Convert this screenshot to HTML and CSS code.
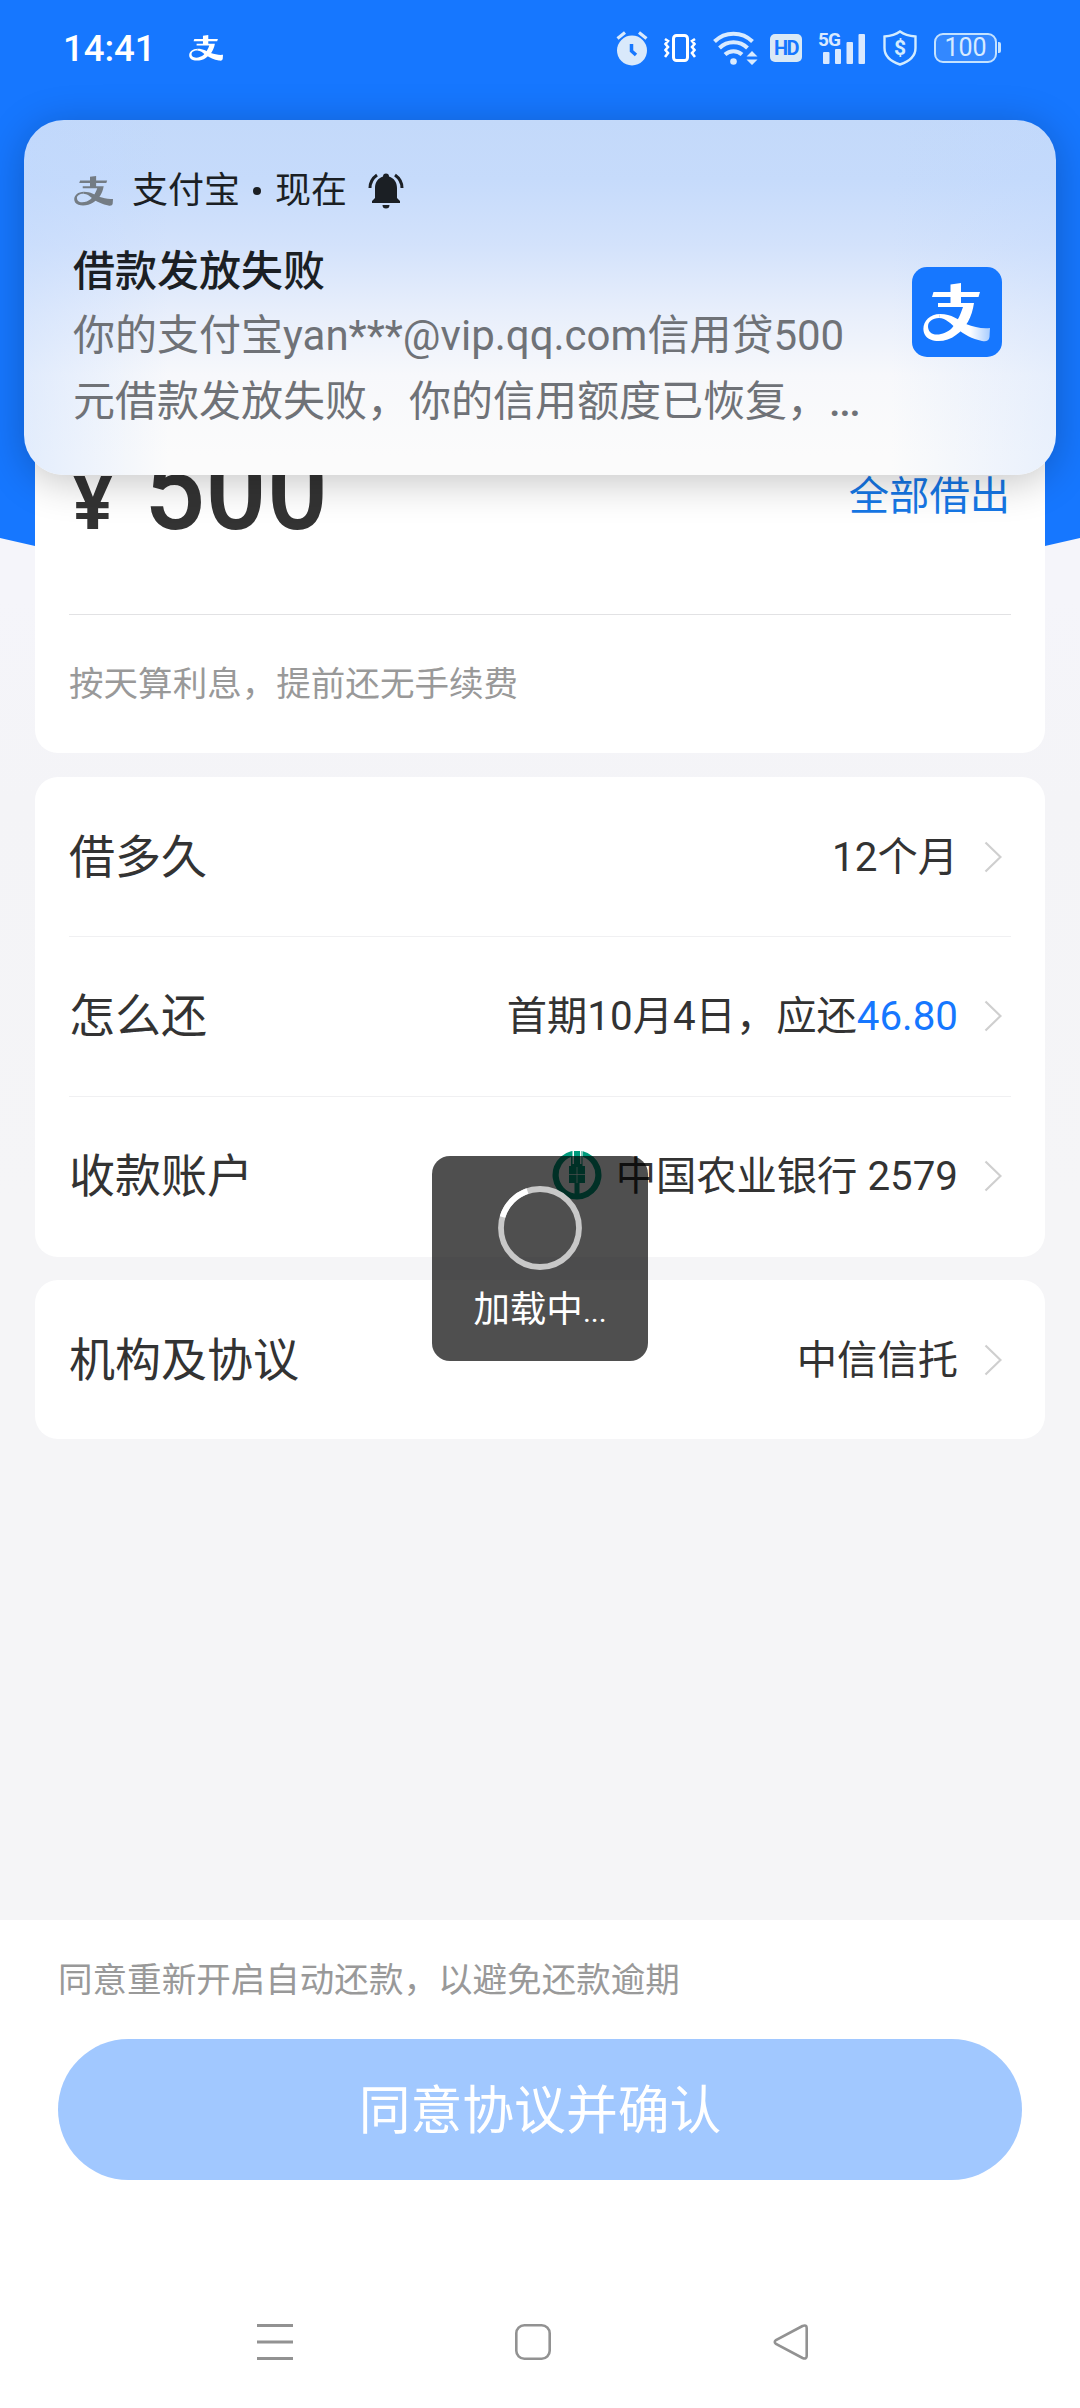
FILE: index.html
```html
<!DOCTYPE html>
<html lang="zh-CN">
<head>
<meta charset="utf-8">
<title>借款</title>
<link rel="stylesheet" href="styles.css">
</head>
<body>
<svg class="defs" width="0" height="0">
  <symbol id="alipay" viewBox="11 16 67 59" preserveAspectRatio="none">
    <path d="M38.5 17.5 49 16V25H68L66.500 30H49V36H62C60 50 54 61 44 68C34 76 18 76 13 68C8 59 15 47 28 47L27 51C18 51 13 58 18 65C23 70 34 67 40 61C46 54 49 46 51 40H26V36H38.500V30H20L21.500 25H38.500Z"/>
    <path d="M28 47C40 47 46 53 54 57C62 60 70 62 78 61L77.500 70C77 74 74 75 70 74C60 72 52 67 45 62C39 57 34 51 27 51Z"/>
  </symbol>
  <symbol id="chevron" viewBox="0 0 18 32"><path d="M1.500 1.500 16.500 16 1.500 30.500" fill="none" stroke="#cfcfcf" stroke-width="2.200"/></symbol>
</svg>
<div class="screen">
  <header class="status">
    <span class="clock">14:41</span>
    <svg class="status-app" width="34" height="26" fill="#fff"><use href="#alipay"/></svg>
    <div class="status-icons">
      <svg width="32" height="35" viewBox="0 0 32 35"><circle cx="16" cy="19.500" r="15" fill="#d9e9fb"/><path d="M1.500 7.500 9 1.500M30.500 7.500 23 1.500" stroke="#d9e9fb" stroke-width="3.200"/><path d="M15.500 13V20L20 24" fill="none" stroke="#1677ff" stroke-width="3.500"/></svg>
      <svg class="i-vibrate" width="32" height="28" viewBox="0 0 32 28" fill="none" stroke="#fff"><rect x="9.500" y="1.500" width="14" height="25" rx="3" stroke-width="3"/><path d="M1 5 4 7 1.500 10 4 13 1.500 16 4 19 1 23M31 5 28 7 30.500 10 28 13 30.500 16 28 19 31 23" stroke-width="2.600"/></svg>
      <svg class="i-wifi" width="44" height="34" viewBox="0 0 44 34"><g fill="none" stroke="#d9ebff" stroke-width="4"><path d="M1.500 10.500A27 27 0 0 1 39.500 10.500"/><path d="M6.500 17A20 20 0 0 1 34.500 17"/><path d="M12 23.500A12.500 12.500 0 0 1 29 23.500"/></g><circle cx="20.500" cy="30.500" r="3.300" fill="#d9ebff"/><path d="M33.500 25.500 39 20 44.500 25.500ZM33.500 28.500H44.500L39 34Z" fill="#d9ebff"/></svg>
      <span class="i-hd">HD</span>
      <div class="i-signal"><span>5G</span><svg width="46" height="32" viewBox="0 0 46 32" fill="#d9e9ff"><rect x="4" y="20" width="6.500" height="12" rx="1"/><rect x="16" y="17" width="6" height="15" rx="1"/><rect x="27.500" y="10" width="6.500" height="22" rx="1"/><rect x="39.500" y="2" width="6.500" height="30" rx="1"/></svg></div>
      <div class="i-shield"><svg width="34" height="36" viewBox="0 0 34 36"><path d="M17 1.500C21 4.500 26 6 32.500 6.500V18C32.500 26 26 31.500 17 34.500C8 31.500 1.500 26 1.500 18V6.500C8 6 13 4.500 17 1.500Z" fill="none" stroke="#d3ecff" stroke-width="2.400"/></svg><span>$</span></div>
      <div class="battery"><span>100</span></div>
    </div>
  </header>

  <main class="content">
    <section class="card amount-card">
      <div class="amount-row">
        <div class="amount"><span class="yen">¥</span><span class="num">500</span></div>
        <a class="all">全部借出</a>
      </div>
      <p class="note">按天算利息，提前还无手续费</p>
    </section>
    <section class="card terms">
      <div class="row"><span class="label">借多久</span><span class="value">12个月</span><svg class="chev" width="18" height="32"><use href="#chevron"/></svg></div>
      <div class="row"><span class="label">怎么还</span><span class="value">首期10月4日，应还<b>46.80</b></span><svg class="chev" width="18" height="32"><use href="#chevron"/></svg></div>
      <div class="row"><span class="label">收款账户</span>
        <svg class="bank" width="50" height="50" viewBox="0 0 50 50"><g fill="#009a7c"><path d="M19 1.200A24.500 24.500 0 1 0 31 1.200V7A19 19 0 0 1 27.500 43.500V33H33V16H30.500V1.200L29.500 1V14H28V1H22V14H20.500V1ZM22.500 33V43.500A19 19 0 0 1 19 7V16H17V33Z"/></g><path d="M25 17V33M17 24.500H33" stroke="#fff" stroke-width=".7"/></svg>
        <span class="value">中国农业银行 2579</span><svg class="chev" width="18" height="32"><use href="#chevron"/></svg></div>
    </section>
    <section class="card">
      <div class="row"><span class="label">机构及协议</span><span class="value">中信信托</span><svg class="chev" width="18" height="32"><use href="#chevron"/></svg></div>
    </section>
  </main>

  <footer class="footer">
    <p class="hint">同意重新开启自动还款，以避免还款逾期</p>
    <button class="confirm">同意协议并确认</button>
    <nav class="nav">
      <svg width="36" height="36" viewBox="0 0 36 36" fill="none" stroke="#929292" stroke-width="3"><path d="M0 1.500H36M0 18H36M0 34.500H36"/></svg>
      <svg width="36" height="36" viewBox="0 0 36 36" fill="none" stroke="#929292" stroke-width="2.600"><rect x="1.300" y="1.300" width="33.400" height="33.400" rx="8"/></svg>
      <svg width="36" height="36" viewBox="0 0 36 36" fill="none" stroke="#929292" stroke-width="2.600"><path d="M29.500 2 3 16Q.5 18 3 20L29.500 34Q33.700 35.500 33.700 32V4Q33.700.5 29.500 2Z"/></svg>
    </nav>
  </footer>

  <aside class="notification">
    <div class="n-head">
      <svg width="39" height="30" fill="#747c84"><use href="#alipay"/></svg>
      <span class="n-app">支付宝</span><i class="n-dot"></i><span>现在</span>
      <svg class="bell" width="36" height="36" viewBox="0 0 36 36" fill="#1b1f24"><path d="M18 .5A3 3 0 0 1 21 3.500C26 5 29 9.500 29 15V25L32 28V30H4V28L7 25V15C7 9.500 10 5 15 3.500A3 3 0 0 1 18 .5ZM14.500 32H21.500A3.500 3.500 0 0 1 14.500 32Z"/><path d="M2 15Q2 7 9 2M34 15Q34 7 27 2" fill="none" stroke="#1b1f24" stroke-width="3"/></svg>
    </div>
    <div class="n-main">
      <div class="n-text">
        <h1>借款发放失败</h1>
        <p>你的支付宝yan***@vip.qq.com信用贷500<br>元借款发放失败，你的信用额度已恢复，<span class="dots">...</span></p>
      </div>
      <div class="n-logo"><svg width="67" height="59"><defs><linearGradient id="tail" x1="0" x2="1"><stop offset=".6" stop-color="#fff"/><stop offset="1" stop-color="#a9cdff"/></linearGradient></defs><svg viewBox="11 16 67 59"><path fill="#fff" d="M38.500 17.500 49 16V25H68L66.500 30H49V36H62C60 50 54 61 44 68C34 76 18 76 13 68C8 59 15 47 28 47L27 51C18 51 13 58 18 65C23 70 34 67 40 61C46 54 49 46 51 40H26V36H38.500V30H20L21.500 25H38.500Z"/><path fill="url(#tail)" d="M28 47C40 47 46 53 54 57C62 60 70 62 78 61L77.500 70C77 74 74 75 70 74C60 72 52 67 45 62C39 57 34 51 27 51Z"/></svg></svg></div>
    </div>
  </aside>

  <div class="toast">
    <svg width="84" height="84" viewBox="0 0 84 84" fill="none" stroke-width="5.800"><circle cx="42" cy="42" r="39" stroke="#c8c8c8"/><path d="M4.500 31A39 39 0 0 1 29.500 5" stroke="#fff"/></svg>
    <span>加载中<small>...</small></span>
  </div>
</div>
</body>
</html>
```
FILE: styles.css
```css
* { box-sizing: border-box; margin: 0; padding: 0; }
body { margin: 0; font-family: Roboto, "Noto Sans CJK SC", sans-serif; font-weight: 400; color: #333; }
.defs { position: absolute; }
.screen {
  position: relative; isolation: isolate; width: 1080px; height: 2408px; overflow: hidden;
  display: flex; flex-direction: column;
  background: linear-gradient(#f5f5fa 600px, #f4f4f7 800px, #f5f5f7 1200px);
}
.screen::before {
  content: ""; position: absolute; z-index: -1; inset: 0 0 auto; height: 560px; background: #1677ff;
  clip-path: polygon(0 0, 100% 0, 100% 538px, 1045px 546px, 35px 546px, 0 538px);
}

/* Status bar */
.status { height: 96px; padding: 0 78px 0 63px; display: flex; align-items: center; color: #fff; }
.clock { width: 94px; font: 500 36.500px/1 Roboto, sans-serif; white-space: nowrap; padding-top: 2px; }
.status-app { margin-left: 32px; }
.status-icons { margin-left: auto; display: flex; align-items: center; }
.i-vibrate { margin-left: 16px; }
.i-wifi { margin-left: 17px; overflow: visible; }
.i-hd {
  margin-left: 13px; width: 32px; height: 28px; border-radius: 5px; background: #d9e9f6; color: #1677ff;
  font: 700 20px/29px "Roboto", sans-serif; letter-spacing: -1.5px; text-align: center;
}
.i-signal { margin-left: 17px; position: relative; display: flex; }
.i-signal span { position: absolute; left: -1px; top: -2px; font: 700 19px/19px Roboto, sans-serif; letter-spacing: -1px; color: #d9e9ff; }
.i-shield { margin-left: 18px; display: grid; place-items: center; color: #d3ecff; }
.i-shield > * { grid-area: 1 / 1; }
.i-shield span { font: 700 21px/36px Roboto, sans-serif; }
.battery {
  position: relative; margin: 0 5px 0 17px; width: 63px; height: 30px; border: 2.500px solid #c4e2ff; border-radius: 9px;
  background: #3388ff; text-align: center; font: 400 25px/26px Roboto, sans-serif; color: #d8ebff;
}
.battery::after { content: ""; position: absolute; right: -6px; top: 7px; width: 3px; height: 11px; border-radius: 0 2px 2px 0; background: #c4e2ff; }

/* Cards */
.content { flex: 1; padding: 0 35px; display: flex; flex-direction: column; }
.card { background: #fff; border-radius: 23px; padding: 0 34px; margin-bottom: 23px; }
.amount-card { height: 457px; margin: 200px 0 24px; display: flex; flex-direction: column; }
.amount-row { height: 319px; padding: 0 1px; display: flex; justify-content: space-between; border-bottom: 1.500px solid #e2e2e4; }
.amount { padding-top: 125px; display: flex; align-items: baseline; color: #333; }
.yen { width: 74px; padding-left: 3px; font: 700 74px/1 Roboto, sans-serif; }
.num { font: 500 116px/136px Roboto, sans-serif; transform: scaleX(.93); transform-origin: 0 50%; }
.all { margin-top: 171px; font-size: 40.300px; line-height: 60px; color: #1677e6; }
.note { padding-top: 43px; font-size: 34.560px; line-height: 52px; color: #999; }
.row { height: 159px; display: flex; align-items: center; }
.row + .row { height: 160px; border-top: 1.500px solid #f0f0f2; padding-bottom: 2px; }
.terms { padding-bottom: 1px; }
.label { margin-right: auto; padding-bottom: 7px; font-size: 46px; }
.value { padding-bottom: 7px; font-size: 40.300px; white-space: nowrap; }
.value b { font-weight: 400; color: #1677ff; }
.chev { margin: 0 9px 0 26px; }
.bank { margin: 0 14px 2px 0; }

/* Footer */
.footer { height: 488px; background: #fff; padding: 34px 58px 0; display: flex; flex-direction: column; }
.hint { font-size: 34.560px; line-height: 52px; color: #999; }
.confirm {
  margin-top: 33px; height: 141px; flex: none; border: 0; border-radius: 71px; background: #a1c8ff;
  color: #fff; font: inherit; font-size: 51.800px; padding-bottom: 6px;
}
.nav { margin-top: 144px; padding: 0 213px 0 199px; display: flex; justify-content: space-between; }

/* Notification banner */
.notification {
  position: absolute; left: 24px; top: 120px; width: 1032px; height: 355px; border-radius: 40px;
  padding: 51px 54px 0 50px; color: #1b1f24;
  background: linear-gradient(90deg, rgba(190,215,255,.4), rgba(220,232,255,0) 14%, rgba(220,232,255,0) 84%, rgba(190,215,255,.3)),
    linear-gradient(#c3d9fa 0, #c6dbfb 60px, #d3e2fb 125px, #e7eefb 190px, #f7f8fb 255px, #fbfbfb 335px);
  box-shadow: 0 6px 42px rgba(0,0,0,.24);
}
.n-head { height: 40px; display: flex; align-items: center; font-size: 36px; line-height: 40px; white-space: nowrap; }
.n-app { margin-left: 19px; }
.n-dot { width: 8px; height: 8px; border-radius: 50%; background: #1b1f24; margin: 0 14px 0 13px; }
.bell { margin-left: 21px; }
.n-main { display: flex; justify-content: space-between; }
.n-text { padding-top: 29px; margin-left: -1px; }
.n-text h1 { font-size: 42px; line-height: 63px; font-weight: 500; }
.n-text p { font-size: 42px; line-height: 66px; color: #6f7277; white-space: nowrap; }
.dots { letter-spacing: -1.500px; font-weight: 500; }
.n-logo { flex: none; margin-top: 56px; width: 90px; height: 90px; border-radius: 15px; background: #1677ff; padding: 16px 0 0 11px; }

/* Loading toast */
.toast {
  position: absolute; left: 432px; top: 1156px; width: 216px; height: 205px; border-radius: 18px;
  background: rgba(0,0,0,.69); color: #fff; display: flex; flex-direction: column; align-items: center; padding-top: 30px;
}
.toast span { margin-top: 13px; font-size: 36.500px; line-height: 54px; white-space: nowrap; }
.toast small { font-size: 30px; }
```
